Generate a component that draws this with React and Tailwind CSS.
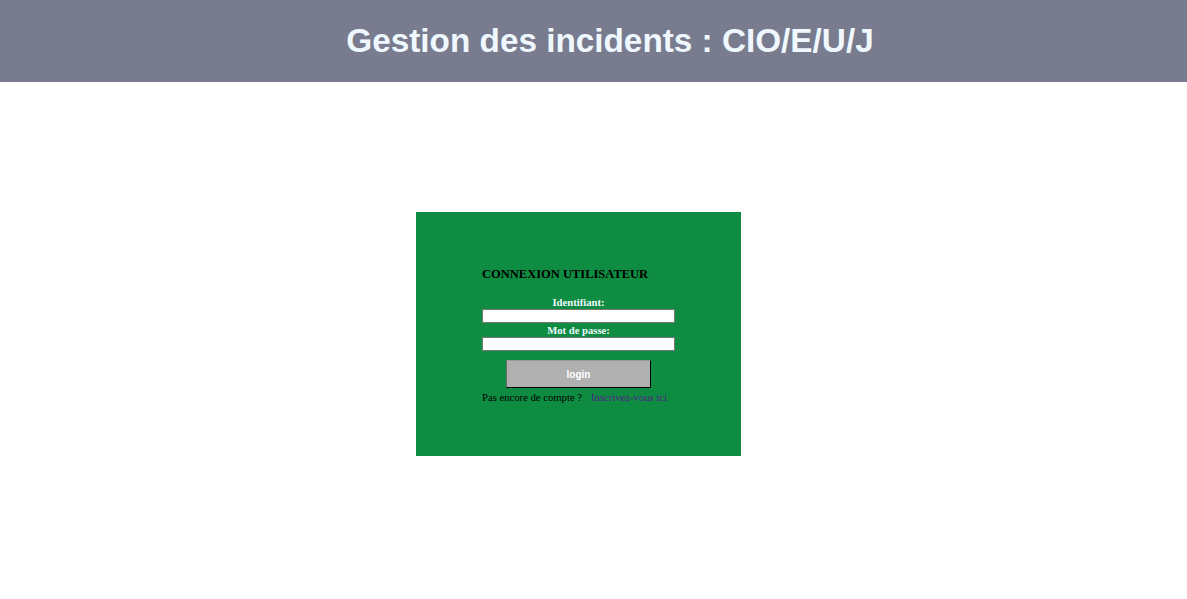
import { useState } from 'react';

const serif = { fontFamily: '"Liberation Serif", "Times New Roman", serif' };

export default function App() {
  const [login, setLogin] = useState('');
  const [password, setPassword] = useState('');

  return (
    <div className="min-h-[599px] bg-white">
      <header className="flex h-[82px] items-center justify-center bg-[#787c8e] pl-[33px]">
        <h1 className="font-['Liberation_Sans',Arial,sans-serif] text-[33.3px] font-bold leading-[38px] text-[#f0f8ff]">
          Gestion des incidents : CIO/E/U/J
        </h1>
      </header>

      <div className="flex justify-center pr-[30px] pt-[130px]">
        <main className="h-[244px] w-[325px] bg-[#0e8c42] px-[66px] pt-[55px]" style={serif}>
          <h2 className="text-[12.5px] font-bold leading-[14px] text-black">CONNEXION UTILISATEUR</h2>
          <form className="mt-[14px] flex flex-col" onSubmit={(e) => e.preventDefault()}>
            <label className="text-center text-[10.67px] font-bold leading-[14px] text-[#f0f8ff]">Identifiant:</label>
            <input
              type="text"
              value={login}
              onChange={(e) => setLogin(e.target.value)}
              className="block h-[14px] w-[193px] border border-[#767676] bg-white px-[2px] text-[10px] outline-none"
            />
            <label className="text-center text-[10.67px] font-bold leading-[14px] text-[#f0f8ff]">Mot de passe:</label>
            <input
              type="password"
              value={password}
              onChange={(e) => setPassword(e.target.value)}
              className="block h-[14px] w-[193px] border border-[#767676] bg-white px-[2px] text-[10px] outline-none"
            />
            <button
              type="submit"
              className="mx-auto mt-[9px] block h-[28px] w-[145px] border border-t-[#9a9a9a] border-l-[#6b6b6b] border-r-black border-b-black bg-[#b0b0b0] font-['Liberation_Sans',Arial,sans-serif] text-[10px] font-bold text-white"
            >
              login
            </button>
            <p className="mt-[2px] text-[10.67px] leading-[14px] text-black">
              Pas encore de compte ?
              <a href="#" className="ml-[9px] text-[#551a8b]">Inscrivez-vous ici</a>
            </p>
          </form>
        </main>
      </div>
    </div>
  );
}
